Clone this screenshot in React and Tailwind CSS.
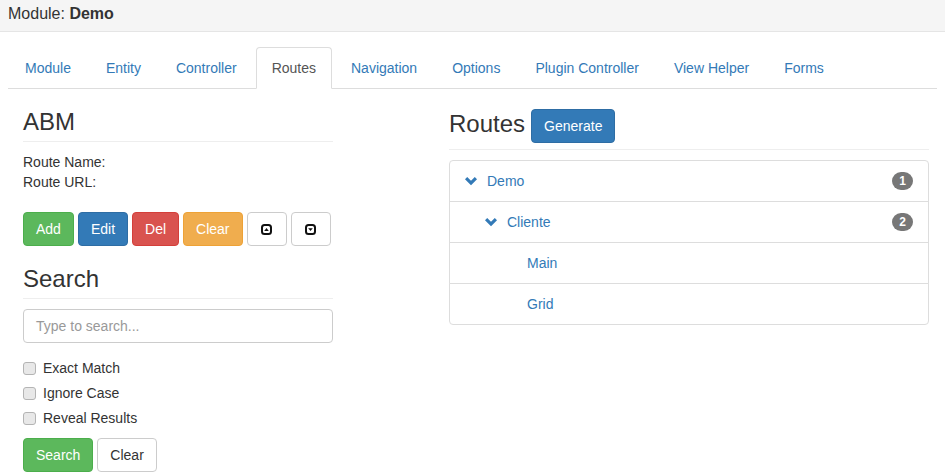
import React from "react";

const font = { fontFamily: '"Liberation Sans", Arial, Helvetica, sans-serif' };

function Chevron() {
  return (
    <svg width="12" height="9" viewBox="0 0 12 9" className="block">
      <polygon points="0,2.2 2.2,0 6,3.8 9.8,0 12,2.2 6,8.2" fill="#337ab7" />
    </svg>
  );
}

function CollapseIcon({ down }) {
  return (
    <svg width="11" height="11" viewBox="0 0 11 11" className="block">
      <rect x="1" y="1" width="9" height="9" rx="2.5" fill="none" stroke="#111" strokeWidth="2" />
      {down ? (
        <polygon points="3.2,4.3 7.8,4.3 5.5,7.1" fill="#111" />
      ) : (
        <polygon points="3.2,6.9 7.8,6.9 5.5,4.1" fill="#111" />
      )}
    </svg>
  );
}

function Checkbox({ label }) {
  return (
    <div className="flex items-center h-[20px]">
      <span className="w-[13px] h-[13px] rounded-[3px] border border-[#b4b4b4] bg-[#e8e8e8] mr-[7px]" />
      <span>{label}</span>
    </div>
  );
}

const tabs = ["Module", "Entity", "Controller", "Routes", "Navigation", "Options", "Plugin Controller", "View Helper", "Forms"];

const btn = "px-[12px] py-[6px] leading-[20px] text-[14px] border rounded-[4px]";

function Item({ level, label, badge, hasChevron, first, last }) {
  return (
    <div
      className={`flex items-center px-[15px] py-[10px] leading-[20px] border border-[#ddd] bg-white ${first ? "rounded-t-[4px]" : "-mt-px"} ${last ? "rounded-b-[4px]" : ""}`}
    >
      <div style={{ width: level * 20 }} className="shrink-0" />
      <div className="w-[14px] mr-[8px] flex justify-start shrink-0">{hasChevron ? <Chevron /> : null}</div>
      <span className="text-[#337ab7] flex-1">{label}</span>
      {badge ? (
        <span className="bg-[#777] text-white text-[12px] font-bold leading-[12px] px-[7px] py-[3px] rounded-[10px]">
          {badge}
        </span>
      ) : null}
    </div>
  );
}

export default function App() {
  return (
    <div style={font} className="text-[14px] text-[#333] bg-white w-[945px] h-[476px] overflow-hidden">
      <div className="h-[32px] bg-[#f5f5f5] border-b border-[#e5e5e5] flex items-center px-[8px] text-[16px] pb-[3px]">
        <span>Module:&nbsp;</span>
        <span className="font-bold">Demo</span>
      </div>
      <div className="px-[8px]">
        <ul className="flex mt-[15px] border-b border-[#ddd] pl-[1px] gap-[3px]">
          {tabs.map((t) => (
            <li key={t} className="-mb-px">
              <a
                className={`block px-[15px] py-[10px] leading-[20px] border rounded-t-[4px] ${
                  t === "Routes"
                    ? "border-[#ddd] border-b-transparent bg-white text-[#555]"
                    : "border-transparent text-[#337ab7]"
                }`}
              >
                {t}
              </a>
            </li>
          ))}
        </ul>
        <div className="flex">
          <div className="w-[340px] px-[15px]">
            <h3 className="mt-[20px] text-[24px] leading-[26px] pb-[6px] border-b border-[#eee]">ABM</h3>
            <div className="mt-[10px] leading-[20px]">
              <div>Route Name:</div>
              <div>Route URL:</div>
            </div>
            <div className="mt-[20px] flex gap-[4px]">
              <button className={`${btn} bg-[#5cb85c] border-[#4cae4c] text-white`}>Add</button>
              <button className={`${btn} bg-[#337ab7] border-[#2e6da4] text-white`}>Edit</button>
              <button className={`${btn} bg-[#d9534f] border-[#d43f3a] text-white`}>Del</button>
              <button className={`${btn} bg-[#f0ad4e] border-[#eea236] text-white`}>Clear</button>
              <button className={`${btn} bg-white border-[#ccc] w-[40px] flex items-center justify-center`}>
                <CollapseIcon />
              </button>
              <button className={`${btn} bg-white border-[#ccc] w-[40px] flex items-center justify-center`}>
                <CollapseIcon down />
              </button>
            </div>
            <h3 className="mt-[20px] text-[24px] leading-[26px] pb-[6px] border-b border-[#eee]">Search</h3>
            <div className="mt-[10px] h-[34px] border border-[#ccc] rounded-[4px] px-[12px] flex items-center text-[#999]">
              Type to search...
            </div>
            <div className="mt-[15px] flex flex-col gap-[5px]">
              <Checkbox label="Exact Match" />
              <Checkbox label="Ignore Case" />
              <Checkbox label="Reveal Results" />
            </div>
            <div className="mt-[10px] flex gap-[4px]">
              <button className={`${btn} bg-[#5cb85c] border-[#4cae4c] text-white`}>Search</button>
              <button className={`${btn} bg-white border-[#ccc] text-[#333]`}>Clear</button>
            </div>
          </div>
          <div className="w-[480px] ml-[101px]">
            <div className="mt-[20px] flex items-start pb-[6px] border-b border-[#eee]">
              <h3 className="mt-[2px] text-[24px] leading-[26px]">Routes</h3>
              <button className={`${btn} ml-[6px] bg-[#337ab7] border-[#2e6da4] text-white`}>Generate</button>
            </div>
            <div className="mt-[10px]">
              <Item level={0} label="Demo" badge="1" hasChevron first />
              <Item level={1} label="Cliente" badge="2" hasChevron />
              <Item level={2} label="Main" />
              <Item level={2} label="Grid" last />
            </div>
          </div>
        </div>
      </div>
    </div>
  );
}
